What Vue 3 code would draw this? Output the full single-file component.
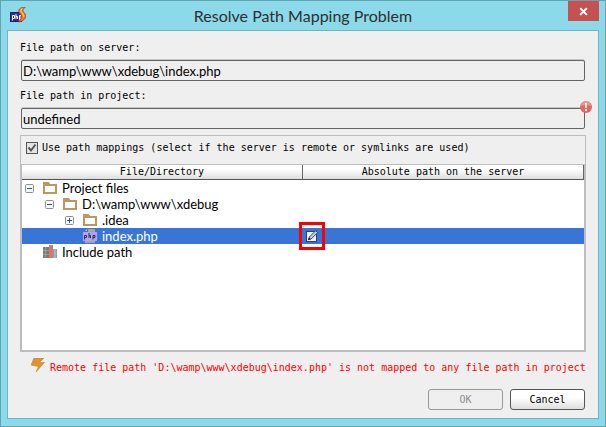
<script setup>
import { ref } from 'vue'

const serverPath = ref('D:\\wamp\\www\\xdebug\\index.php')
const projectPath = ref('undefined')
const useMappings = ref(true)

const rows = [
  { label: 'Project files', icon: 'folder', toggle: 'minus', level: 0 },
  { label: 'D:\\wamp\\www\\xdebug', icon: 'folder', toggle: 'minus', level: 1 },
  { label: '.idea', icon: 'folder', toggle: 'plus', level: 2 },
  { label: 'index.php', icon: 'php', toggle: '', level: 2, selected: true },
  { label: 'Include path', icon: 'library', toggle: '', level: 0 },
]
const message = "Remote file path 'D:\\wamp\\www\\xdebug\\index.php' is not mapped to any file path in project"
</script>

<template>
  <div class="window" role="dialog" aria-labelledby="title">
    <header class="titlebar">
      <svg class="app-icon" viewBox="0 0 16 16" aria-hidden="true">
        <rect x="0.5" y="5.5" width="11" height="9" fill="#2a2f9c" stroke="#171b70" />
        <path d="M2.5 13.5V8.5H4.5V11.5H2.5M6 7V12M6 9.5H7.5V12M9.5 13.5V8.5H11V11.5H9.5" fill="none" stroke="#fff" />
        <path d="M15.500 0C11.500 0 8.500 1.500 8.800 4.500C9 6.700 11.500 7 11.500 9C11.500 11 10.500 12.500 8.500 15C12.500 14.500 16 12 15.700 8.500C15.400 6.200 13 5.500 13 3.500C13 2 14 1 15.500 0Z" fill="#f47b20" stroke="#a92f12" stroke-width=".7" />
        <path d="M12.500 1.500C10.500 2.500 10.500 4 11.500 5.200C13 6.800 14.200 7.500 13.500 10" fill="none" stroke="#ffd35c" stroke-width="1.200" />
      </svg>
      <h1 id="title">Resolve Path Mapping Problem</h1>
      <button class="close" type="button" aria-label="Close">
        <svg viewBox="0 0 8 8" aria-hidden="true"><path d="M1 1L7 7M7 1L1 7" stroke="#fff" stroke-width="1.800" /></svg>
      </button>
    </header>

    <main class="client">
      <label class="caption" for="server">File path on server:</label>
      <div class="field">
        <input id="server" v-model="serverPath" class="path" type="text" readonly />
      </div>
      <label class="caption" for="project">File path in project:</label>
      <div class="field">
        <input id="project" v-model="projectPath" class="path" type="text" readonly />
        <svg class="badge" viewBox="0 0 12 12" aria-hidden="true">
          <circle cx="6" cy="6" r="6" fill="#e0695f" />
          <path d="M1 5A5 5 0 0 1 11 5Q6 3 1 5Z" fill="#ee958c" />
          <path d="M5 2H7L6.700 7H5.300ZM5 8.200H7V10H5Z" fill="#fff" />
        </svg>
      </div>

      <section class="mappings">
        <label class="check">
          <input v-model="useMappings" type="checkbox" />
          <span class="box">
            <svg v-if="useMappings" viewBox="0 0 10 10" aria-hidden="true"><path d="M1.500 4.500L4 7.500L8.500 1.500" fill="none" stroke="#555" stroke-width="2" /></svg>
          </span>
          Use path mappings (select if the server is remote or symlinks are used)
        </label>
        <div class="tree">
          <table>
            <thead>
              <tr><th>File/Directory</th><th>Absolute path on the server</th></tr>
            </thead>
            <tbody>
              <tr v-for="row in rows" :key="row.label" :class="{ selected: row.selected }">
                <td>
                  <div class="node" :class="'level-' + row.level">
                    <button v-if="row.toggle" class="toggle" type="button" :aria-label="'Toggle ' + row.label">
                      <svg viewBox="0 0 9 9" aria-hidden="true">
                        <rect x=".5" y=".5" width="8" height="8" rx="1" fill="#f8f8f8" stroke="#8b8f96" />
                        <path :d="row.toggle === 'plus' ? 'M2 4.500H7M4.500 2V7' : 'M2 4.500H7'" stroke="#344a8c" />
                      </svg>
                    </button>
                    <span v-else class="toggle"></span>
                    <svg class="node-icon" viewBox="0 0 14 14" aria-hidden="true">
                      <path v-if="row.icon === 'folder'" fill="#bd9660" fill-rule="evenodd" d="M0 1H6L7 3H14V13H0ZM2 5V11H12V5Z" />
                      <g v-else-if="row.icon === 'php'">
                        <path d="M5 0H12V14H2V3H5Z" fill="#a9a798" />
                        <path d="M4 0V2H2Z" fill="#c5cbd4" />
                        <rect y="3" width="14" height="9" fill="#b3a1f2" />
                        <path d="M1.500 10.500V6.500H3.500V8.500H1.500M6 4V9M6 6.500H7.500V9M10 10.500V6.500H12V8.500H10" fill="none" stroke="#262344" stroke-width=".9" />
                      </g>
                      <g v-else>
                        <path d="M0 2H6V13H0Z" fill="#777b7c" />
                        <path d="M2.500 2V13M0 5.500H6M0 9.500H6" stroke="#a6aaaa" stroke-width=".7" />
                        <path d="M6 0H10V13H6Z" fill="#e17466" />
                        <path d="M10 4H14V13H10Z" fill="#7da6b5" />
                        <path d="M12 4V13" stroke="#b5d0da" />
                      </g>
                    </svg>
                    <span>{{ row.label }}</span>
                  </div>
                </td>
                <td>
                  <button v-if="row.selected" class="edit" type="button" aria-label="Edit server path">
                    <svg viewBox="0 0 12 12" aria-hidden="true">
                      <rect x=".5" y="1.500" width="10" height="10" fill="#eef2f7" stroke="#30415f" />
                      <path d="M2.500 9.800L3.400 7L9.700 .7L11.700 2.500L5.300 8.900Z" fill="#c8d0da" stroke="#26344e" stroke-width=".9" />
                      <path d="M2 10L3 7.500L4.700 9Z" fill="#111b2e" />
                    </svg>
                  </button>
                </td>
              </tr>
            </tbody>
          </table>
        </div>
      </section>

      <p class="message" role="alert">
        <svg viewBox="0 0 14 14" aria-hidden="true"><path d="M3 0H13L8.500 4.500H13.500L5 14L7.500 8.500L0 7Z" fill="#dc962d" stroke="#b77b2c" stroke-width=".5" /></svg>
        <span>{{ message }}</span>
      </p>
      <footer class="actions">
        <button type="button" disabled>OK</button>
        <button type="button">Cancel</button>
      </footer>
    </main>
  </div>
</template>

<style>
body { margin: 0; }
</style>

<style scoped>
* { box-sizing: border-box; }
.window {
  display: flex;
  flex-direction: column;
  min-height: 100vh;
  padding: 0 6px 7px;
  border: 1px solid #62a3b2;
  background: #8bd9e9;
  color: #000;
  font: 10px/16px "DejaVu Sans Mono", "Liberation Mono", monospace;
}
svg { display: block; }
.titlebar {
  display: grid;
  grid-template-columns: 31px 1fr 31px;
  height: 29px;
}
.app-icon { width: 16px; height: 16px; margin: 6px 0 0 3px; }
h1 {
  margin: 0;
  color: #303030;
  font: 16px/29px Lato, "Open Sans", sans-serif;
  text-align: center;
  white-space: nowrap;
}
.close {
  display: grid;
  place-items: center;
  width: 31px;
  height: 20px;
  padding: 0;
  border: 0;
  background: #c75050;
}
.close svg { width: 9px; height: 9px; }
.client {
  display: flex;
  flex: 1;
  flex-direction: column;
  padding: 8px 12px;
  border: 1px solid #6bb5c5;
  background: #efefef;
}
.caption { height: 21px; line-height: 18px; }
.field { position: relative; margin: 0 1px 6px; }
.path {
  display: block;
  width: 100%;
  height: 21px;
  padding: 0 1px;
  border: 1px solid #646464;
  border-radius: 2px;
  background: #efefef;
  box-shadow: 0 -1px #c8c8c8;
  color: #000;
  font: 13px/19px Lato, "Open Sans", sans-serif;
  outline: 0;
}
.badge { position: absolute; top: -7px; right: -7px; width: 12px; height: 12px; }
.mappings {
  display: flex;
  flex: 1;
  flex-direction: column;
  border: 1px solid #bdbdbd;
}
.check {
  display: flex;
  align-items: center;
  gap: 4px;
  height: 28px;
  padding: 0 5px 4px;
  white-space: nowrap;
}
.check input { position: absolute; opacity: 0; }
.box {
  display: grid;
  place-items: center;
  width: 12px;
  height: 12px;
  border: 1px solid #555;
  background: #e4e4e4;
}
.box svg { width: 10px; height: 10px; }
.tree {
  flex: 1;
  border: 1px solid #bdbdbd;
  background: #fff;
}
table { width: 100%; border-collapse: separate; border-spacing: 0; table-layout: fixed; }
th {
  height: 15px;
  padding: 0;
  border-right: 1px solid #666;
  border-bottom: 1px solid #555;
  background: linear-gradient(#fff 30%, #dedede);
  font-weight: 400;
  line-height: 14px;
}
td {
  height: 16px;
  padding: 0;
  font: 13px/16px Lato, "Open Sans", sans-serif;
  white-space: nowrap;
}
.node { display: flex; align-items: center; height: 16px; padding-left: 3px; }
.level-1 { padding-left: 23px; }
.level-2 { padding-left: 43px; }
.toggle { width: 9px; height: 9px; margin-right: 9px; padding: 0; border: 0; background: none; }
.node-icon { width: 14px; height: 14px; margin-right: 5px; }
.selected { background: #3875d7; color: #fff; }
.edit {
  position: relative;
  display: block;
  width: 12px;
  height: 12px;
  margin-left: 3px;
  padding: 0;
  border: 0;
  background: none;
}
.edit svg { width: 12px; height: 12px; }
.edit::after { content: ""; position: absolute; inset: -8px -7px; border: 3px solid #f00; }
.message {
  display: flex;
  gap: 5px;
  height: 26px;
  margin: 0;
  padding: 6px 0 0 11px;
  color: #f00;
  white-space: nowrap;
}
.message svg { width: 14px; height: 14px; }
.message span { line-height: 20px; }
.actions { display: flex; justify-content: flex-end; gap: 7px; padding: 11px 1px 0 0; }
.actions button {
  width: 75px;
  height: 21px;
  padding: 0;
  border: 1px solid #555;
  border-radius: 3px;
  background: linear-gradient(#fff 40%, #dedede);
  color: #000;
  font: inherit;
}
.actions button:disabled { border-color: #999; background: #efefef; color: #8d8d8d; }
</style>
